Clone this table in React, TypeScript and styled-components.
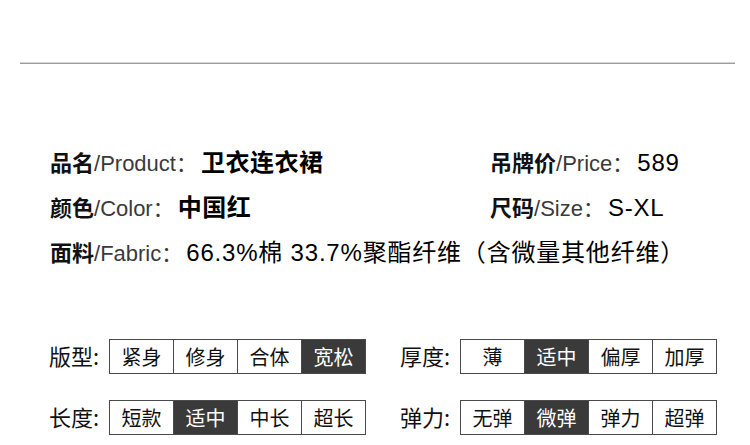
import React from 'react';
import styled, { createGlobalStyle } from 'styled-components';

const GlobalStyle = createGlobalStyle`
  html, body {
    margin: 0;
    padding: 0;
    background: #ffffff;
  }
  body {
    font-family: "Noto Sans CJK SC", "Liberation Sans", sans-serif;
    color: #111;
  }
`;

const Page = styled.div`
  width: 750px;
  height: 445px;
  overflow: hidden;
  padding-top: 62px;
  box-sizing: border-box;
`;

const Rule = styled.div`
  margin: 0 15px 0 20px;
  border-top: 1px solid #d4d4d4;
  border-bottom: 1px solid #9c9c9c;
`;

const InfoGrid = styled.div`
  display: grid;
  grid-template-columns: 440px 1fr;
  grid-auto-rows: 45px;
  margin-top: 75px;
  padding-left: 50px;
`;

const InfoRow = styled.div<{ $wide?: boolean }>`
  line-height: 45px;
  white-space: nowrap;
  grid-column: ${({ $wide }) => ($wide ? '1 / -1' : 'auto')};
`;

const Label = styled.span`
  font-family: "Noto Sans CJK SC", sans-serif;
  font-size: 22px;
  font-weight: 700;
  color: #111;
`;

const English = styled.span`
  font-family: "Liberation Sans", "Noto Sans CJK SC", sans-serif;
  font-size: 22px;
  font-weight: 400;
  color: #3a3a3a;
`;

const Colon = styled.span`
  font-family: "Noto Sans CJK SC", sans-serif;
  font-size: 21px;
  color: #3a3a3a;
  margin-right: 4px;
`;

const Value = styled.span<{ $bold?: boolean }>`
  font-family: "Liberation Sans", "Noto Sans CJK SC", sans-serif;
  font-size: 24px;
  font-weight: ${({ $bold }) => ($bold ? 700 : 400)};
  letter-spacing: ${({ $bold }) => ($bold ? '0.5px' : '0.8px')};
  color: #000;
`;

const OptionGrid = styled.div`
  display: grid;
  grid-template-columns: 351px 1fr;
  row-gap: 26px;
  margin-top: 65px;
  padding-left: 49px;
`;

const OptionRow = styled.div`
  display: flex;
  align-items: center;
`;

const OptionLabel = styled.span`
  width: 60px;
  font-family: "Noto Sans CJK SC", sans-serif;
  font-size: 22px;
  line-height: 1;
  padding-bottom: 3px;
  color: #111;
  white-space: nowrap;
`;

const Choices = styled.div`
  display: flex;
  border: 1px solid #4a4a4a;
`;

const Choice = styled.div<{ $on?: boolean }>`
  width: 63px;
  height: 33px;
  display: flex;
  align-items: center;
  justify-content: center;
  font-family: "Noto Sans CJK SC", sans-serif;
  font-size: 20px;
  background: ${({ $on }) => ($on ? '#3a3a3a' : '#ffffff')};
  color: ${({ $on }) => ($on ? '#ffffff' : '#111')};
  & + & {
    border-left: 1px solid #4a4a4a;
  }
`;

interface Option {
  label: string;
  items: string[];
  active: number;
}

const options: Option[] = [
  { label: '版型:', items: ['紧身', '修身', '合体', '宽松'], active: 3 },
  { label: '厚度:', items: ['薄', '适中', '偏厚', '加厚'], active: 1 },
  { label: '长度:', items: ['短款', '适中', '中长', '超长'], active: 1 },
  { label: '弹力:', items: ['无弹', '微弹', '弹力', '超弹'], active: 1 },
];

const App: React.FC = () => {
  return (
    <Page>
      <GlobalStyle />
      <Rule />

      <InfoGrid>
        <InfoRow>
          <Label>品名</Label>
          <English>/Product</English>
          <Colon>：</Colon>
          <Value $bold>卫衣连衣裙</Value>
        </InfoRow>
        <InfoRow>
          <Label>吊牌价</Label>
          <English>/Price</English>
          <Colon>：</Colon>
          <Value>589</Value>
        </InfoRow>
        <InfoRow>
          <Label>颜色</Label>
          <English>/Color</English>
          <Colon>：</Colon>
          <Value $bold>中国红</Value>
        </InfoRow>
        <InfoRow>
          <Label>尺码</Label>
          <English>/Size</English>
          <Colon>：</Colon>
          <Value>S-XL</Value>
        </InfoRow>
        <InfoRow $wide>
          <Label>面料</Label>
          <English>/Fabric</English>
          <Colon>：</Colon>
          <Value>66.3%棉 33.7%聚酯纤维（含微量其他纤维）</Value>
        </InfoRow>
      </InfoGrid>

      <OptionGrid>
        {options.map((opt) => (
          <OptionRow key={opt.label}>
            <OptionLabel>{opt.label}</OptionLabel>
            <Choices>
              {opt.items.map((item, i) => (
                <Choice key={item + i} $on={i === opt.active}>
                  {item}
                </Choice>
              ))}
            </Choices>
          </OptionRow>
        ))}
      </OptionGrid>
    </Page>
  );
};

export default App;
